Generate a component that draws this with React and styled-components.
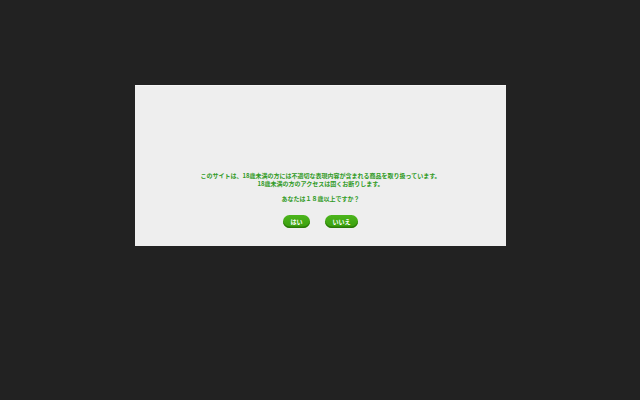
import React from "react";
import styled, { createGlobalStyle } from "styled-components";

//#region Styled Components
const GlobalStyle = createGlobalStyle`
  html, body {
    margin: 0;
    padding: 0;
    background: #222222;
  }
  body {
    font-family: "Noto Sans CJK JP", "Noto Sans", sans-serif;
  }
`;
const Page = styled.div`
  display: flex;
  justify-content: center;
  padding-top: 85px;
  padding-left: 1px;
  min-height: 400px;
  box-sizing: border-box;
`;
const Panel = styled.div`
  display: flex;
  flex-flow: column nowrap;
  justify-content: flex-end;
  align-items: center;
  width: 371px;
  height: 161px;
  box-sizing: border-box;
  padding-bottom: 18px;
  background: #eeeeee;
  border-top: 1px solid #f6f6f6;
`;
const Message = styled.p`
  margin: 0 0 ${props => props.gap || 0}px;
  color: #2f9a1e;
  font-size: 6px;
  line-height: 8px;
  font-weight: 700;
  text-align: center;
`;
const Buttons = styled.div`
  display: flex;
  flex-flow: row nowrap;
  gap: 15px;
`;
const Button = styled.button`
  height: 13px;
  padding: 0 7.5px;
  border: none;
  border-radius: 7px;
  background: linear-gradient(#4cb51c, #3a9e0e);
  box-shadow: inset 0 -1.5px 0 #2a7a08;
  color: #ffffff;
  font-family: inherit;
  font-size: 6px;
  line-height: 13px;
  font-weight: 700;
  cursor: pointer;
`;
//#endregion

const App = () => (
  <Page>
    <GlobalStyle />
    <Panel>
      <Message gap={7}>
        このサイトは、18歳未満の方には不適切な表現内容が含まれる商品を取り扱っています。
        <br />
        18歳未満の方のアクセスは固くお断りします。
      </Message>
      <Message gap={12}>あなたは１８歳以上ですか？</Message>
      <Buttons>
        <Button>はい</Button>
        <Button>いいえ</Button>
      </Buttons>
    </Panel>
  </Page>
);

export default App;
